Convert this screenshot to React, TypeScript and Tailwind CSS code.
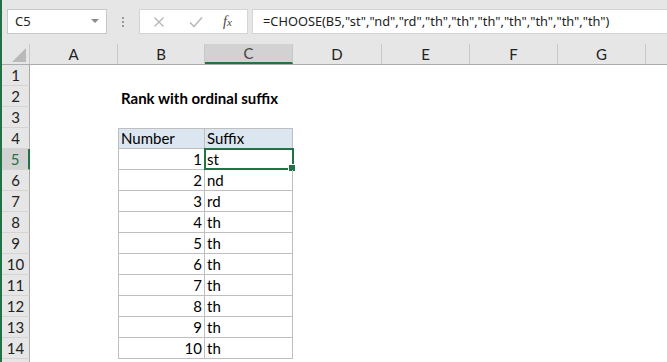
import React from "react";

const GREEN = "#217346";

type Col = { l: string; w: string };
const cols: Col[] = [
  { l: "A", w: "w-[88px]" },
  { l: "B", w: "w-[87px]" },
  { l: "C", w: "w-[88px]" },
  { l: "D", w: "w-[89px]" },
  { l: "E", w: "w-[88px]" },
  { l: "F", w: "w-[88px]" },
  { l: "G", w: "w-[88px]" },
  { l: "", w: "w-[88px]" },
];

const suffix: Record<number, string> = {
  1: "st",
  2: "nd",
  3: "rd",
};

function Cell({ w, children, className = "" }: { w: string; children?: React.ReactNode; className?: string }) {
  return <div className={`${w} shrink-0 h-full box-border ${className}`}>{children}</div>;
}

function Toolbar() {
  return (
    <div className="h-[44px] bg-[#e6e6e6] flex items-start pt-[9px] pl-[5px] shrink-0">
      <div className="w-[100px] h-[25px] bg-white border border-[#c8c8c8] flex items-center justify-between pl-[7px] pr-[7px] box-border">
        <span className="text-[13px] text-[#222]" style={{ fontFamily: "'Noto Sans', sans-serif" }}>C5</span>
        <svg width="8" height="5" viewBox="0 0 8 5"><path d="M0 0 L8 0 L4 4 Z" fill="#8a8a8a" /></svg>
      </div>
      <div className="w-[32px] h-[25px] flex flex-col items-center justify-center gap-[2px]">
        <div className="w-[2px] h-[2px] bg-[#9a9a9a]" />
        <div className="w-[2px] h-[2px] bg-[#9a9a9a]" />
        <div className="w-[2px] h-[2px] bg-[#9a9a9a]" />
      </div>
      <div className="w-[109px] h-[25px] bg-white border border-[#d4d4d4] box-border flex items-center pl-[12px]">
        <svg width="12" height="12" viewBox="0 0 12 12" className="ml-[1px]">
          <path d="M1.5 1.5 L10.5 10.5 M10.5 1.5 L1.5 10.5" stroke="#b4b4b4" strokeWidth="1.3" />
        </svg>
        <svg width="14" height="12" viewBox="0 0 14 12" className="ml-[24px]">
          <path d="M1 6.5 L5 10.5 L13 1.5" stroke="#b4b4b4" strokeWidth="1.4" fill="none" />
        </svg>
        <span className="ml-[20px] text-[14px] italic text-[#444]" style={{ fontFamily: "'Liberation Serif', serif" }}>
          f<span className="text-[11px]">x</span>
        </span>
      </div>
      <div className="ml-[4px] flex-1 h-[25px] bg-white border border-[#d4d4d4] border-r-0 box-border flex items-center pl-[10px]">
        <span className="text-[12.8px] text-[#222] whitespace-nowrap" style={{ fontFamily: "'Noto Sans', sans-serif" }}>
          =CHOOSE(B5,"st","nd","rd","th","th","th","th","th","th","th")
        </span>
      </div>
    </div>
  );
}

function ColumnHeader() {
  return (
    <div className="h-[21px] flex shrink-0 bg-[#e6e6e6] border-b border-[#ababab] box-border">
      <div className="w-[28px] shrink-0 h-full relative border-r border-[#c8c8c8] box-border">
        <svg width="14" height="14" viewBox="0 0 14 14" className="absolute right-[3px] bottom-[2px]">
          <path d="M14 0 L14 14 L0 14 Z" fill="#b9b9b9" />
        </svg>
      </div>
      {cols.map((c) => {
        const sel = c.l === "C";
        return (
          <div
            key={c.l + c.w}
            className={`${c.w} shrink-0 h-full box-border flex items-center justify-center text-[15px] border-r border-[#c8c8c8] ${
              sel ? "bg-[#d2d2d2] text-[#444] border-b-2 border-b-[#217346]" : "text-[#222]"
            }`}
          >
            {c.l}
          </div>
        );
      })}
    </div>
  );
}

function Row({ n }: { n: number }) {
  const selRow = n === 5;
  const inTable = n >= 4 && n <= 14;
  const isHead = n === 4;
  const num = n - 4;
  return (
    <div className="h-[21px] flex shrink-0">
      <div
        className={`w-[28px] shrink-0 h-full box-border border-b border-[#d4d4d4] flex items-center justify-center text-[15px] ${
          selRow ? "bg-[#d2d2d2] text-[#217346] border-r-2 border-r-[#217346]" : "bg-[#e6e6e6] text-[#222] border-r border-r-[#ababab]"
        }`}
      >
        {n <= 14 ? n : ""}
      </div>
      {cols.map((c) => {
        if (c.l === "B") {
          if (n === 2) {
            return (
              <Cell key={c.l} w={c.w} className="relative">
                <span className="absolute left-[3px] top-[1px] whitespace-nowrap font-bold text-[15px] text-black">
                  Rank with ordinal suffix
                </span>
              </Cell>
            );
          }
          if (inTable) {
            return (
              <Cell
                key={c.l}
                w={c.w}
                className={`border-l border-b border-r border-[#bfbfbf] flex items-center px-[2px] text-[15px] text-black ${
                  isHead ? "border-t bg-[#dce6f1] justify-start" : "justify-end"
                }`}
              >
                {isHead ? "Number" : num}
              </Cell>
            );
          }
        }
        if (c.l === "C" && inTable) {
          return (
            <Cell
              key={c.l}
              w={c.w}
              className={`relative border-b border-r border-[#bfbfbf] flex items-center px-[2px] text-[15px] text-black ${
                isHead ? "border-t bg-[#dce6f1]" : ""
              }`}
            >
              {isHead ? "Suffix" : suffix[num] ?? "th"}
              {selRow && (
                <div className="absolute -left-[1px] -top-[1px] w-[90px] h-[22px] border-2 border-[#217346] box-border pointer-events-none">
                  <div className="absolute -right-[4px] -bottom-[4px] w-[6px] h-[6px] bg-[#217346] border border-white box-content" />
                </div>
              )}
            </Cell>
          );
        }
        return <Cell key={c.l + c.w} w={c.w} />;
      })}
    </div>
  );
}

export default function App() {
  const rows = Array.from({ length: 15 }, (_, i) => i + 1);
  return (
    <div
      className="w-[667px] h-[362px] overflow-hidden bg-white flex flex-col border-l-2 border-[#217346] box-border"
      style={{ fontFamily: "Lato, 'Open Sans', sans-serif", borderLeftColor: GREEN }}
    >
      <Toolbar />
      <ColumnHeader />
      {rows.map((n) => (
        <Row key={n} n={n} />
      ))}
    </div>
  );
}
